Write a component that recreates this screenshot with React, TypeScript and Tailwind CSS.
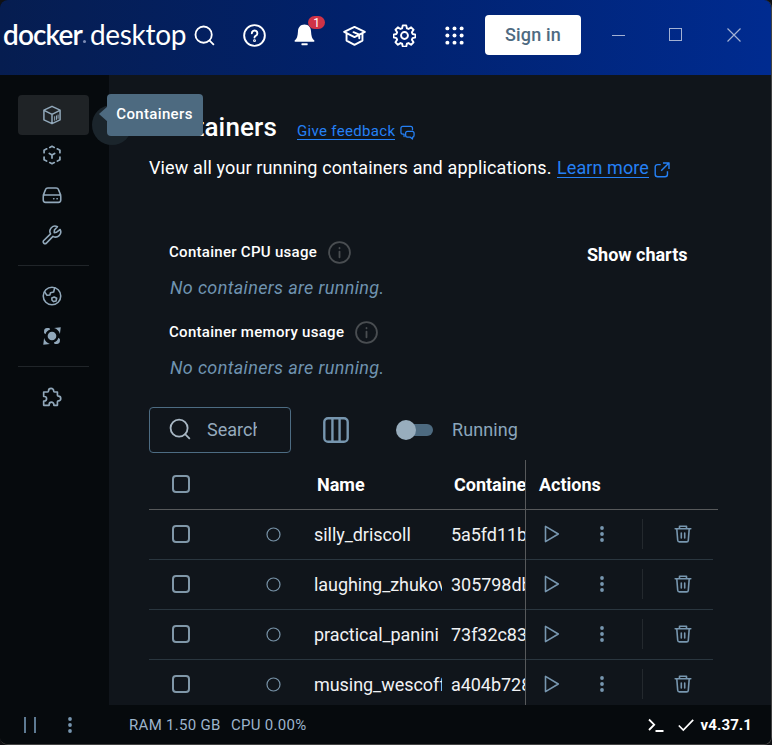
import type { ReactNode } from "react";

const rows = [
  { name: "silly_driscoll", id: "5a5fd11b0c" },
  { name: "laughing_zhukovsky", id: "305798db1e" },
  { name: "practical_panini", id: "73f32c83ad" },
  { name: "musing_wescoff", id: "a404b7280f" },
];

function Icon({ size = 24, sw = 1.6, className = "", children }: { size?: number; sw?: number; className?: string; children: ReactNode }) {
  return (
    <svg width={size} height={size} viewBox="0 0 24 24" fill="none" stroke="currentColor" strokeWidth={sw} strokeLinecap="round" strokeLinejoin="round" className={`block shrink-0 ${className}`}>
      {children}
    </svg>
  );
}

function HeaderCell({ children }: { children: ReactNode }) {
  return <div className="relative flex h-[50px] w-[50px] shrink-0 items-center justify-center pr-px text-white">{children}</div>;
}

function SearchIcon({ size = 24, sw = 1.8 }: { size?: number; sw?: number }) {
  return (
    <Icon size={size} sw={sw}>
      <circle cx="11" cy="11" r="9.3" />
      <path d="M17.8 17.8 22 22" strokeLinecap="square" />
    </Icon>
  );
}

function Header() {
  return (
    <header className="flex h-[75px] shrink-0 items-start bg-linear-to-r from-[#061d50] via-[#01216b] via-45% to-[#002b90] pt-[10px]">
      <div className="flex h-[48px] w-[180px] shrink-0 items-center whitespace-nowrap pl-[3px] font-['Lato'] text-[28px] leading-none text-white">
        <span className="w-[79px] font-semibold tracking-[-0.9px]">docker</span>
        <span className="mt-[14px] ml-px mr-[4px] h-[3px] w-[3px] shrink-0 rounded-full bg-[#7d8cb4]" />
        <span className="font-normal tracking-[-0.3px]">desktop</span>
      </div>
      <HeaderCell><SearchIcon size={21} sw={2.1} /></HeaderCell>
      <HeaderCell>
        <Icon size={23} sw={2}>
          <circle cx="12" cy="12" r="10.8" />
          <path d="M9.2 9.600a2.900 2.900 0 1 1 4.300 2.600c-1 .5-1.500 1-1.500 2" />
          <circle cx="12" cy="17.400" r="0.500" />
        </Icon>
      </HeaderCell>
      <HeaderCell>
        <svg width="23" height="24" viewBox="0 0 24 24" fill="white" className="block">
          <path d="M12 1c-4.300 0-6.600 3-6.800 7-.2 5-1.300 8.200-3.200 9.600-.7.6-.5 1.400.4 1.400h19.200c.9 0 1.100-.8.4-1.400-1.900-1.400-3-4.600-3.200-9.600C18.600 4 16.300 1 12 1z" />
          <rect x="8.800" y="20.700" width="6.500" height="2" rx="0.500" />
        </svg>
        <span className="absolute top-[6px] left-[28px] flex h-[13px] w-[17px] items-center justify-center rounded-full bg-[#cf3347] text-[12px] leading-none">1</span>
      </HeaderCell>
      <HeaderCell>
        <Icon size={23} sw={2}>
          <path d="M12 3 1.200 8.200 12 13.600l10.800-5.400zM3.700 10v7.300l8.300 4.400 8.300-4.400V10M11 8.600l6 2.600v3.600" />
        </Icon>
      </HeaderCell>
      <HeaderCell>
        <Icon size={23} sw={2}>
          <circle cx="12" cy="12" r="3.600" />
          <path d="M10.200 1.400h3.600l.7 3.100 1.700.7 2.700-1.700 2.500 2.500-1.700 2.700.7 1.700 3.100.7v2.800l-3.100.8-.7 1.700 1.700 2.700-2.500 2.500-2.700-1.700-1.700.7-.7 3h-3.600l-.7-3-1.700-.7-2.700 1.700-2.500-2.500 1.700-2.700-.7-1.700-3.100-.8v-2.800l3.100-.7.7-1.700L2.600 6l2.500-2.500 2.700 1.700 1.700-.7z" />
        </Icon>
      </HeaderCell>
      <HeaderCell>
        <svg width="19" height="19" viewBox="0 0 20 20" fill="white" className="block">
          {[2.5, 10, 17.5].map((y) => [2.5, 10, 17.5].map((x) => <circle key={`${x}-${y}`} cx={x} cy={y} r="2.100" />))}
        </svg>
      </HeaderCell>
      <button className="mt-[5px] ml-[5px] h-[40px] w-[96px] shrink-0 rounded-[4px] bg-white pb-px text-[18px] font-medium tracking-[0.200px] text-[#4e6a81]">Sign in</button>
      <div className="ml-[8px] flex h-[50px] text-[#a3b1d3]">
        <div className="flex w-[58px] items-center justify-center"><div className="h-px w-[13px] bg-current" /></div>
        <div className="flex w-[58px] items-center justify-center pr-[2px] pb-px"><div className="h-[13px] w-[13px] border border-current" /></div>
        <div className="flex w-[58px] items-center justify-center">
          <svg width="14" height="14" viewBox="0 0 14 14" fill="none" stroke="currentColor" strokeWidth="1.200" className="block"><path d="M.5.5l13 13M13.500.5l-13 13" /></svg>
        </div>
      </div>
    </header>
  );
}

function NavItem({ active = false, children }: { active?: boolean; children: ReactNode }) {
  return <div className={`relative flex h-[40px] w-[71px] items-center justify-center pr-[3px] text-[#91a8ba] ${active ? "rounded-[4px] bg-[#1f2326]" : ""}`}>{children}</div>;
}

function Sidebar() {
  return (
    <nav className="flex w-[109px] shrink-0 flex-col bg-[#060a0d] pt-[20px] pl-[18px]">
      <NavItem active>
        <Icon size={20} sw={1.8}>
          <path d="M12 1.600 21.700 6.200v11.600L12 22.400 2.300 17.800V6.200zM2.500 6.400 12 11.200l9.500-4.800M12 11.200v11" />
          <path d="M15.200 14v4.300M17.400 13v4.300M19.300 12v4" strokeWidth="1.200" />
        </Icon>
        <div className="absolute top-[10px] left-[74px] z-10 h-[40px] w-[40px] rounded-full bg-[#1b252c]" />
        <div className="absolute top-[-1px] left-[89px] z-20 flex h-[42px] w-[96px] items-center justify-center rounded-[4px] bg-[#4d6a80] pb-[2px] pr-px text-[15px] font-medium tracking-[0.350px] text-white">
          Containers
          <svg width="9" height="16" viewBox="0 0 9 16" className="absolute top-[12px] left-[-8px]"><path d="M0 8 9 0v16z" fill="#4d6a80" /></svg>
        </div>
      </NavItem>
      <NavItem>
        <Icon size={20} sw={2.100}>
          <path d="M9.300 2.900 12 1.600l2.700 1.300M18.300 4.600l3.200 1.600v3M21.500 14.500v3.200l-3 1.500M14.700 21.100 12 22.400l-2.700-1.300M5.500 19.200l-3-1.500v-3.200M2.500 9.200v-3l3.200-1.600M8.800 10.200 12 12l3.200-1.800M12 12v3.600" />
        </Icon>
      </NavItem>
      <NavItem>
        <Icon size={20} sw={1.900}>
          <path d="M1.500 12.300 4.200 5.500A3 3 0 0 1 7 3.500h10a3 3 0 0 1 2.800 2l2.700 6.800M3.200 12h17.600c1 0 1.700.8 1.700 1.800V18c0 1.800-1 2.800-2.800 2.800H4.300c-1.800 0-2.800-1-2.800-2.800v-4.200c0-1 .7-1.800 1.700-1.800zM14 16.500h.3M18 16.500h.3" />
        </Icon>
      </NavItem>
      <NavItem>
        <Icon size={20} sw={1.900}>
          <path d="M14.700 9.200l2.800-.6 4.300-3.200a6.200 6.200 0 0 1-8.600 8.200L5.300 21.700c-.9.900-2.300.9-3.200 0s-.9-2.200 0-3.100l8.200-8A6.200 6.200 0 0 1 18.500 2l-3.600 4z" />
        </Icon>
      </NavItem>
      <div className="my-[10px] h-px w-[71px] bg-[#202529]" />
      <NavItem>
        <Icon size={20} sw={1.900}>
          <circle cx="12" cy="12" r="10.500" />
          <path d="M3.200 7.200 6 11.200l3.500-.5.700-2.700 3.800-.8 1.200-5M11.800 14.500l2.800-1.300 3 1.500-.7 3.200-3 .8-1.900-1.600z" />
        </Icon>
      </NavItem>
      <NavItem>
        <svg width="20" height="20" viewBox="0 0 24 24" fill="currentColor" className="block">
          <circle cx="12" cy="12" r="5.200" />
          <path d="M14.500 2.500 22.500 1.500 21.500 9.500C20.500 6 18 3.500 14.500 2.500zM9.500 21.500 1.500 22.500 2.500 14.500c1 3.500 3.500 6 7 7zM2.500 8.500V6C2.500 4 4 2.500 6 2.500h2.800l1 1.800C7 5 5 7 4.200 9.800zM21.500 15.500V18c0 2-1.500 3.500-3.500 3.500h-2.800l-1-1.800c2.800-.7 4.800-2.700 5.600-5.500z" />
        </svg>
      </NavItem>
      <div className="mt-[10px] mb-[10px] h-px w-[71px] bg-[#202529]" />
      <NavItem>
        <Icon size={20} sw={2}>
          <path d="M2 6h4.800c.8 0 1-.5 1-1.200a3.100 3.100 0 0 1 6.200 0c0 .7.200 1.200 1 1.200h3.500v4c0 .8.400 1 1.200 1a2.800 2.800 0 0 1 0 5.600c-.8 0-1.200.2-1.200 1V22h-4.300v-1a2.800 2.800 0 0 0-5.600 0v1H2v-5.200h.8a2.700 2.700 0 0 0 0-5.400H2z" />
        </Icon>
      </NavItem>
    </nav>
  );
}

function Usage({ label }: { label: string }) {
  return (
    <div>
      <div className="flex h-[40px] items-center">
        <span className="text-[15px] font-medium tracking-[0.290px] text-white">{label}</span>
        <Icon size={23} sw={1.900} className="mt-px ml-[11px] text-[#494d51]">
          <circle cx="12" cy="12" r="10.900" />
          <path d="M12 11v6M12 7.300v.3" />
        </Icon>
      </div>
      <div className="flex h-[32px] items-center pb-[2px] pl-px text-[18px] tracking-[0.350px] text-[#6f93b0] italic">No containers are running.</div>
    </div>
  );
}

function Checkbox() {
  return <div className="ml-[23px] h-[18px] w-[18px] shrink-0 rounded-[4px] border-2 border-[#8097a8]" />;
}

function DotsIcon() {
  return (
    <svg width="6" height="18" viewBox="0 0 6 18" fill="currentColor" className="block shrink-0">
      <circle cx="3" cy="3" r="1.900" /><circle cx="3" cy="9" r="1.900" /><circle cx="3" cy="15" r="1.900" />
    </svg>
  );
}

function ContainerTable() {
  return (
    <div className="mt-[6px] flex h-[246px] w-[569px] overflow-hidden">
      <div className="w-[376px] shrink-0 overflow-hidden">
        <div className="flex h-[51px] items-center border-b border-[#57595b] text-[18px] font-bold text-white">
          <Checkbox />
          <div className="ml-[127px] w-[137px] shrink-0">Name</div>
          <div className="w-[72px] shrink-0 overflow-hidden whitespace-nowrap">Container ID</div>
        </div>
        {rows.map((r) => (
          <div key={r.id} className="flex h-[50px] items-center border-b border-[#2a363f] pb-px text-[18px] tracking-[-0.050px] text-[#f0f2f4]">
            <Checkbox />
            <svg width="15" height="15" viewBox="0 0 15 15" fill="none" stroke="#7893a8" strokeWidth="1.200" className="mt-px ml-[76px] block shrink-0"><circle cx="7.500" cy="7.500" r="6.500" /></svg>
            <div className="ml-[33px] w-[128px] shrink-0 overflow-hidden whitespace-nowrap">{r.name}</div>
            <div className="ml-[9px] w-[74px] shrink-0 overflow-hidden whitespace-nowrap">{r.id}</div>
          </div>
        ))}
      </div>
      <div className="mt-px w-px shrink-0 bg-[#57595b]" />
      <div className="w-[192px] shrink-0">
        <div className="flex h-[51px] items-center border-b border-[#57595b] pl-[13px] text-[18px] font-bold text-white">Actions</div>
        {rows.map((r) => (
          <div key={r.id} className="flex h-[50px] w-[187px] items-center border-b border-[#2a363f] pb-px text-[#7796af]">
            <svg width="16" height="18" viewBox="0 0 16 18" fill="none" stroke="currentColor" strokeWidth="1.600" strokeLinejoin="round" className="ml-[18px] block shrink-0"><path d="M1.500 1.400v15.200L14.300 9z" /></svg>
            <div className="ml-[39px]"><DotsIcon /></div>
            <div className="ml-[37px] h-[30px] w-px bg-[#24292e]" />
            <svg width="18" height="18" viewBox="0 0 18 18" fill="none" stroke="currentColor" strokeWidth="1.600" strokeLinecap="round" strokeLinejoin="round" className="ml-[31px] block shrink-0">
              <path d="M1.200 3.800h15.600M5.500 3.500V1.200h7v2.300M2.800 4l.9 11.300c.1 1 .7 1.600 1.700 1.600h7.200c1 0 1.600-.6 1.700-1.600L15.200 4M7.300 8v5M10.700 8v5" />
            </svg>
          </div>
        ))}
      </div>
    </div>
  );
}

function Main() {
  return (
    <main className="min-w-0 flex-1 bg-[#10151b] pt-[32px] pl-[40px]">
      <div className="flex h-[40px] items-center">
        <h1 className="w-[148px] text-[26px] font-medium tracking-[0.150px] text-white">Containers</h1>
        <a className="mt-[9px] border-b border-[#2580f5] text-[15px] leading-[16px] tracking-[0.330px] text-[#2580f5]">Give feedback</a>
        <Icon size={15} sw={2} className="mt-[10px] ml-[5px] text-[#2580f5]">
          <path d="M6.500 14.500H4.500c-2 0-3-1-3-3V5c0-2 1-3 3-3h12.500c2 0 3 1 3 3v2.500M6.500 14.500v4M12 10h7.500c2 0 3 1 3 3v3.500c0 2-1 3-2.500 3v3l-3.500-3H12c-2 0-3-1-3-3V13c0-2 1-3 3-3z" />
        </Icon>
      </div>
      <div className="flex h-[42px] items-center whitespace-nowrap text-[18px] text-white">
        <span className="w-[408px] shrink-0 pb-px tracking-[0.130px]">View all your running containers and applications.</span>
        <a className="border-b border-[#2580f5] leading-[19px] tracking-[0.080px] text-[#2580f5]">Learn more</a>
        <Icon size={16} sw={2.100} className="mt-[4px] ml-[5px] text-[#2580f5]">
          <path d="M9 4H5.500C3 4 1.800 5.200 1.800 7.500v11c0 2.500 1.200 3.700 3.700 3.700h11c2.500 0 3.700-1.200 3.700-3.700V15M14.500 1.500h8v8M22.500 1.500 11.500 12.500" strokeLinecap="square" />
        </Icon>
      </div>
      <div className="mt-[43px] flex pl-[20px]">
        <div className="flex w-[418px] shrink-0 flex-col gap-[8px]">
          <Usage label="Container CPU usage" />
          <Usage label="Container memory usage" />
        </div>
        <div className="mt-[10px] text-[18px] leading-[25px] font-bold text-white">Show charts</div>
      </div>
      <div className="mt-[23px] flex h-[46px] items-center">
        <div className="flex h-[46px] w-[142px] shrink-0 items-center rounded-[4px] border border-[#4d6c83] pb-[2px] pl-[19px] text-[#a8b7c4]">
          <SearchIcon size={22} sw={2} />
          <span className="ml-[16px] w-[50px] overflow-hidden text-[18px] text-[#95aabd]">Search</span>
        </div>
        <Icon size={26} sw={2.200} className="ml-[32px] text-[#7796af]">
          <rect x="1.200" y="1.200" width="21.600" height="21.600" rx="3.500" />
          <path d="M8.700 1.500v21M15.300 1.500v21" />
        </Icon>
        <svg width="37" height="20" viewBox="0 0 37 20" className="ml-[47px] block shrink-0">
          <rect x="4" y="4" width="33" height="12" rx="6" fill="#4d6a80" />
          <circle cx="10" cy="10" r="10" fill="#98adbd" />
        </svg>
        <span className="ml-[19px] pb-[2px] text-[18px] tracking-[0.100px] text-[#8ba6bc]">Running</span>
      </div>
      <ContainerTable />
    </main>
  );
}

function Footer() {
  return (
    <footer className="flex h-[39px] shrink-0 items-center bg-[#060a0d] text-[15px] text-[#9db4cc]">
      <div className="ml-[24px] flex h-[16px] w-[12px] shrink-0 justify-between">
        <div className="w-[2px] bg-[#5d7a92]" /><div className="w-[2px] bg-[#5d7a92]" />
      </div>
      <div className="ml-[31px] w-[62px] text-[#7796af]"><DotsIcon /></div>
      <span className="w-[102px] pt-[2px] tracking-[0.300px]">RAM 1.50 GB</span>
      <span className="pt-[2px] tracking-[0.300px]">CPU 0.00%</span>
      <div className="ml-auto flex items-center pr-[19px] text-white">
        <svg width="16" height="16" viewBox="0 0 16 16" fill="none" stroke="currentColor" strokeWidth="1.800" className="block"><path d="M1 2.500l5.200 5.200L1 13M7.500 14h8" /></svg>
        <svg width="16" height="14" viewBox="0 0 16 14" fill="none" stroke="currentColor" strokeWidth="1.700" className="ml-[14px] block"><path d="M.8 7.500l4.500 4.500L15.200 1.800" /></svg>
        <span className="ml-[7px] pt-px font-bold tracking-[0.100px]">v4.37.1</span>
      </div>
    </footer>
  );
}

export default function App() {
  return (
    <div className="h-[745px] w-[772px] overflow-hidden bg-[#101114] font-['Roboto','Liberation_Sans',sans-serif]">
      <div className="flex h-[745px] w-[772px] flex-col overflow-hidden rounded-[8px] border-r border-b border-[#424242] bg-[#060a0d]">
        <Header />
        <div className="flex h-[630px] shrink-0">
          <Sidebar />
          <Main />
        </div>
        <Footer />
      </div>
    </div>
  );
}
